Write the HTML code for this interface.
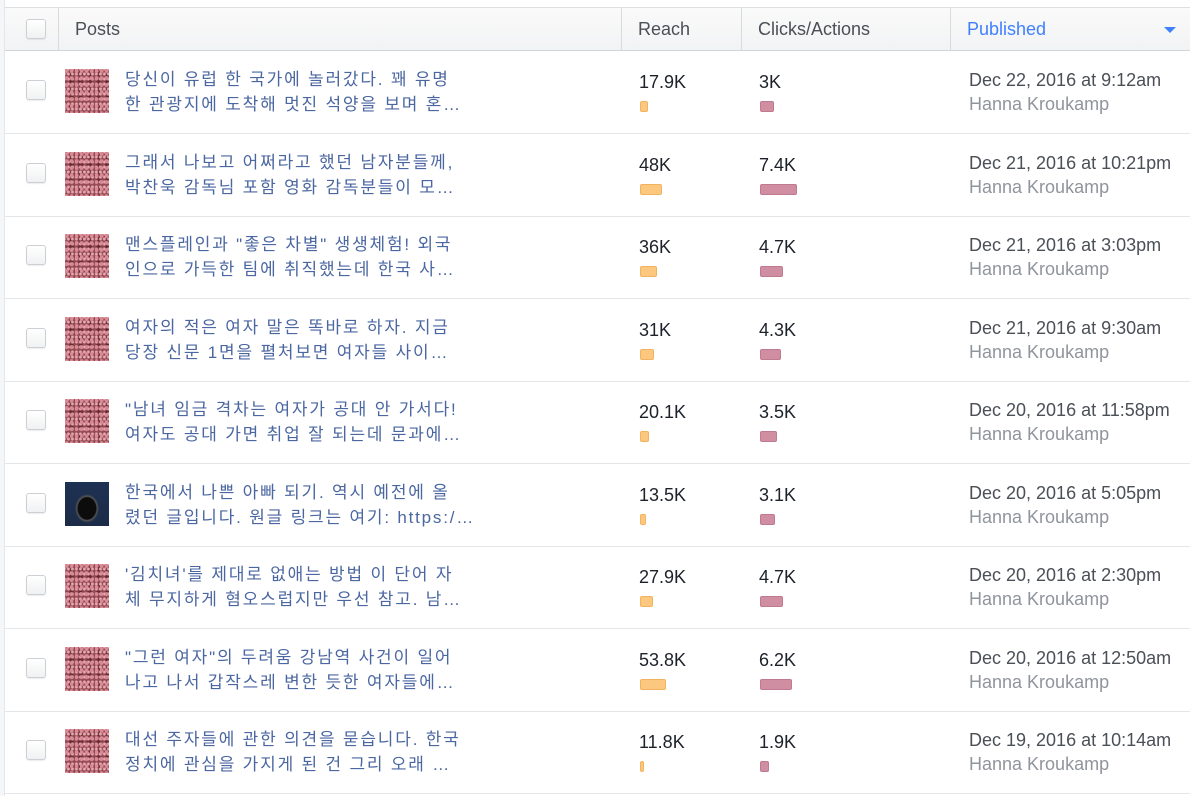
<!DOCTYPE html>
<html><head><meta charset="utf-8"><style>
*{margin:0;padding:0;box-sizing:border-box}
body{width:1190px;height:796px;background:#fff;position:relative;overflow:hidden;font-family:"Liberation Sans","Noto Sans CJK KR",sans-serif}
.lb{position:absolute;left:0;top:0;width:5px;height:796px;background:#f5f6f7;border-right:1px solid #e5e6e9}
.top{position:absolute;left:5px;top:0;width:1185px;height:8px;border-bottom:1px solid #dddfe2}
.hdr{position:absolute;left:5px;top:8px;width:1185px;height:43px;background:linear-gradient(#fafafa,#f2f3f4);border-bottom:1px solid #d3d5d9}
.hc{position:absolute;top:0;height:42px;line-height:42px;font-size:18px;color:#4b4f56;border-left:1px solid #d8dadd;padding-left:16px}
.cb{position:absolute;width:20px;height:20px;border:1px solid #ccd0d5;border-radius:3px;background:linear-gradient(#fff,#f0f1f2);box-shadow:0 1px 1px rgba(0,0,0,.08)}
.row{position:absolute;left:5px;width:1185px;height:83px;border-bottom:1px solid #e5e6e9}
.th{position:absolute;left:60px;top:18px;width:44px;height:44px;background:
radial-gradient(circle at 30% 30%,#d88a95 0 1.5px,transparent 2.5px) 0 0/5px 7px,
radial-gradient(circle at 60% 60%,#e7a9b0 0 1px,transparent 2px) 1px 2px/4px 5px,
radial-gradient(circle at 50% 50%,#6a2a30 0 2px,transparent 3px) 2px 1px/9px 8px,
#934852}
.th.d{background:radial-gradient(ellipse at 50% 60%,#0c0c0c 0 9px,#555 10px,transparent 12px),linear-gradient(#1d3152,#1c2c47)}
.tx{position:absolute;left:120px;top:16px;width:350px;font-size:17px;line-height:25px;color:#4b67a1;letter-spacing:1.8px}
.tx div{white-space:nowrap;overflow:hidden}
.num{position:absolute;top:21px;font-size:18px;color:#1d2129}
.bar{position:absolute;top:50px;height:11px;border-radius:2px}
.r{background:#fcc77e;border:1px solid #f3b35e}
.c{background:#d08ea3;border:1px solid #c07a90}
.dt{position:absolute;left:964px;top:17px;font-size:18px;color:#4b4f56;line-height:24px}
.dt span{color:#90949c;display:block}
</style></head><body>
<div class="lb"></div><div class="top"></div>
<div class="hdr">
<div class="cb" style="left:21px;top:11px"></div>
<div class="hc" style="left:53px;width:563px">Posts</div>
<div class="hc" style="left:616px;width:120px">Reach</div>
<div class="hc" style="left:736px;width:209px">Clicks/Actions</div>
<div class="hc" style="left:945px;width:240px;color:#4080ff">Published<span style="position:absolute;right:14px;top:19px;border-left:6px solid transparent;border-right:6px solid transparent;border-top:6px solid #4080ff"></span></div>
</div>
<div class="row" style="top:51px"><div class="cb" style="left:21px;top:29px"></div><div class="th"></div><div class="tx"><div>당신이 유럽 한 국가에 놀러갔다. 꽤 유명</div><div>한 관광지에 도착해 멋진 석양을 보며 혼…</div></div><div class="num" style="left:634px">17.9K</div><div class="bar r" style="left:635px;width:8px"></div><div class="num" style="left:754px">3K</div><div class="bar c" style="left:755px;width:14px"></div><div class="dt">Dec 22, 2016 at 9:12am<span>Hanna Kroukamp</span></div></div>
<div class="row" style="top:134px"><div class="cb" style="left:21px;top:29px"></div><div class="th"></div><div class="tx"><div>그래서 나보고 어쩌라고 했던 남자분들께,</div><div>박찬욱 감독님 포함 영화 감독분들이 모…</div></div><div class="num" style="left:634px">48K</div><div class="bar r" style="left:635px;width:22px"></div><div class="num" style="left:754px">7.4K</div><div class="bar c" style="left:755px;width:37px"></div><div class="dt">Dec 21, 2016 at 10:21pm<span>Hanna Kroukamp</span></div></div>
<div class="row" style="top:216px"><div class="cb" style="left:21px;top:29px"></div><div class="th"></div><div class="tx"><div>맨스플레인과 "좋은 차별" 생생체험! 외국</div><div>인으로 가득한 팀에 취직했는데 한국 사…</div></div><div class="num" style="left:634px">36K</div><div class="bar r" style="left:635px;width:17px"></div><div class="num" style="left:754px">4.7K</div><div class="bar c" style="left:755px;width:23px"></div><div class="dt">Dec 21, 2016 at 3:03pm<span>Hanna Kroukamp</span></div></div>
<div class="row" style="top:299px"><div class="cb" style="left:21px;top:29px"></div><div class="th"></div><div class="tx"><div>여자의 적은 여자 말은 똑바로 하자. 지금</div><div>당장 신문 1면을 펼처보면 여자들 사이…</div></div><div class="num" style="left:634px">31K</div><div class="bar r" style="left:635px;width:14px"></div><div class="num" style="left:754px">4.3K</div><div class="bar c" style="left:755px;width:21px"></div><div class="dt">Dec 21, 2016 at 9:30am<span>Hanna Kroukamp</span></div></div>
<div class="row" style="top:381px"><div class="cb" style="left:21px;top:29px"></div><div class="th"></div><div class="tx"><div>"남녀 임금 격차는 여자가 공대 안 가서다!</div><div>여자도 공대 가면 취업 잘 되는데 문과에…</div></div><div class="num" style="left:634px">20.1K</div><div class="bar r" style="left:635px;width:9px"></div><div class="num" style="left:754px">3.5K</div><div class="bar c" style="left:755px;width:17px"></div><div class="dt">Dec 20, 2016 at 11:58pm<span>Hanna Kroukamp</span></div></div>
<div class="row" style="top:464px"><div class="cb" style="left:21px;top:29px"></div><div class="th d"></div><div class="tx"><div>한국에서 나쁜 아빠 되기. 역시 예전에 올</div><div>렸던 글입니다. 원글 링크는 여기: https:/…</div></div><div class="num" style="left:634px">13.5K</div><div class="bar r" style="left:635px;width:6px"></div><div class="num" style="left:754px">3.1K</div><div class="bar c" style="left:755px;width:15px"></div><div class="dt">Dec 20, 2016 at 5:05pm<span>Hanna Kroukamp</span></div></div>
<div class="row" style="top:546px"><div class="cb" style="left:21px;top:29px"></div><div class="th"></div><div class="tx"><div>'김치녀'를 제대로 없애는 방법 이 단어 자</div><div>체 무지하게 혐오스럽지만 우선 참고. 남…</div></div><div class="num" style="left:634px">27.9K</div><div class="bar r" style="left:635px;width:13px"></div><div class="num" style="left:754px">4.7K</div><div class="bar c" style="left:755px;width:23px"></div><div class="dt">Dec 20, 2016 at 2:30pm<span>Hanna Kroukamp</span></div></div>
<div class="row" style="top:629px"><div class="cb" style="left:21px;top:29px"></div><div class="th"></div><div class="tx"><div>"그런 여자"의 두려움 강남역 사건이 일어</div><div>나고 나서 갑작스레 변한 듯한 여자들에…</div></div><div class="num" style="left:634px">53.8K</div><div class="bar r" style="left:635px;width:26px"></div><div class="num" style="left:754px">6.2K</div><div class="bar c" style="left:755px;width:32px"></div><div class="dt">Dec 20, 2016 at 12:50am<span>Hanna Kroukamp</span></div></div>
<div class="row" style="top:711px"><div class="cb" style="left:21px;top:29px"></div><div class="th"></div><div class="tx"><div>대선 주자들에 관한 의견을 묻습니다. 한국</div><div>정치에 관심을 가지게 된 건 그리 오래 …</div></div><div class="num" style="left:634px">11.8K</div><div class="bar r" style="left:635px;width:4px"></div><div class="num" style="left:754px">1.9K</div><div class="bar c" style="left:755px;width:9px"></div><div class="dt">Dec 19, 2016 at 10:14am<span>Hanna Kroukamp</span></div></div>
</body></html>
